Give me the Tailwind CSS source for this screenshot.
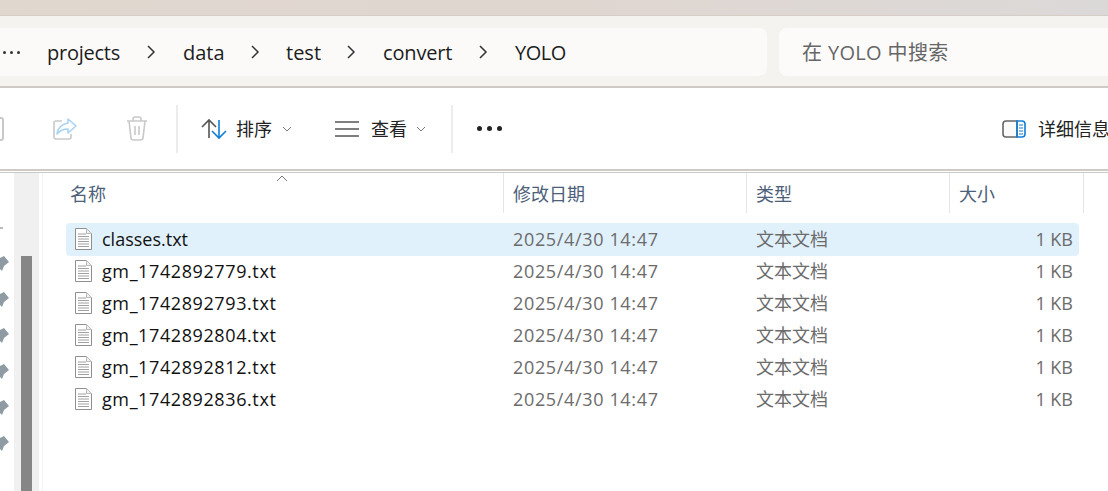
<!DOCTYPE html>
<html lang="en">
<head>
  <meta charset="UTF-8" />
  <title>YOLO</title>
  <script src="https://cdn.jsdelivr.net/npm/@tailwindcss/browser@4"></script>
</head>
<body class="w-[1108px] h-[491px] overflow-hidden bg-white font-['Open_Sans','Noto_Sans_CJK_SC',sans-serif]">

  <!-- window top edge -->
  <div class="h-[15px] bg-gradient-to-r from-[#e0d7cf] via-[#e0d6d0] to-[#dbd9d8]"></div>

  <!-- address bar -->
  <div class="h-[73px] flex gap-3 pt-3 pb-2.5 bg-[#f5f3f0] border-t border-b-2 border-t-[#d6cdc6] border-b-[#d0cac5]">
    <div class="w-[767px] h-12 flex items-center bg-[#fbfaf9] rounded-r-lg text-[20px] text-[#1c1c1c]">
      <div class="w-[47px] pl-[3px] flex gap-[4px]">
        <span class="size-[3px] rounded-full bg-[#333]"></span>
        <span class="size-[3px] rounded-full bg-[#333]"></span>
        <span class="size-[3px] rounded-full bg-[#333]"></span>
      </div>
      <span class="w-[73px] pt-0.5 tracking-[-0.25px]">projects</span>
      <svg class="ml-[26px] w-[10px] h-[14px]" viewBox="0 0 10 14" fill="none" stroke="#333" stroke-width="1.5"><path d="M2 1l6 6-6 6"/></svg>
      <span class="ml-[27px] w-[41px] pt-0.5">data</span>
      <svg class="ml-[26px] w-[10px] h-[14px]" viewBox="0 0 10 14" fill="none" stroke="#333" stroke-width="1.5"><path d="M2 1l6 6-6 6"/></svg>
      <span class="ml-[26px] w-[34px] pt-0.5">test</span>
      <svg class="ml-[26px] w-[10px] h-[14px]" viewBox="0 0 10 14" fill="none" stroke="#333" stroke-width="1.5"><path d="M2 1l6 6-6 6"/></svg>
      <span class="ml-[27px] w-[69px] pt-0.5 tracking-[-0.15px]">convert</span>
      <svg class="ml-[26px] w-[10px] h-[14px]" viewBox="0 0 10 14" fill="none" stroke="#333" stroke-width="1.5"><path d="M2 1l6 6-6 6"/></svg>
      <span class="ml-[27px] pt-0.5 tracking-[-0.5px]">YOLO</span>
    </div>
    <div class="flex-1 h-12 flex items-center pl-[23px] pt-0.5 bg-[#fcfbfa] rounded-l-lg text-[20px] tracking-[0.35px] text-[#666]">在 YOLO 中搜索</div>
  </div>

  <!-- command bar -->
  <div class="h-[81px] flex items-center overflow-hidden whitespace-nowrap bg-white text-[18px] text-[#222] *:shrink-0">
    <div class="w-[176px] flex items-center">
      <svg class="w-[4px] h-[24px]" viewBox="0 0 4 24" fill="none" stroke="#c8c8c8" stroke-width="2"><path d="M-4 1h5q2 0 2 2v18q0 2-2 2h-5"/></svg>
      <svg class="ml-[48px] w-[26px] h-[24px]" viewBox="0 0 26 24" fill="none" stroke-width="1.6">
        <path d="M10 4H4Q2 4 2 6v14q0 2 2 2h13q2 0 2-2v-3" stroke="#c9c9c9"/>
        <path d="M16 2l8 7-8 7v-4q-7 0-11 5 1-9 11-11z" stroke="#a9d3f5" stroke-linejoin="round"/>
      </svg>
      <svg class="ml-[47px] w-[24px] h-[26px]" viewBox="0 0 24 26" fill="none" stroke="#c9c9c9" stroke-width="1.6">
        <path d="M2 5h20M8 5V3q0-2 2-2h4q2 0 2 2v2M4 5l2 17q0 2 3 2h6q3 0 3-2l2-17M10 10v9M14 10v9"/>
      </svg>
    </div>
    <div class="w-[2px] h-12 bg-[#ececec]"></div>
    <svg class="ml-[23px] w-[26px] h-[22px]" viewBox="0 0 26 22" fill="none" stroke-width="1.6">
      <path d="M8 20V2M1 9l7-7 7 7" stroke="#555"/>
      <path d="M18 2v18M11 13l7 7 7-7" stroke="#0f7fd8"/>
    </svg>
    <span class="ml-[9px] pt-0.5">排序</span>
    <svg class="ml-[10px] w-[10px] h-[6px]" viewBox="0 0 10 6" fill="none" stroke="#777"><path d="M1 1l4 4 4-4"/></svg>
    <svg class="ml-[43px] w-[25px] h-[16px]" viewBox="0 0 25 16" fill="none" stroke="#555" stroke-width="1.6"><path d="M0 1h24M0 8h24M0 15h24"/></svg>
    <span class="ml-[11px] pt-0.5">查看</span>
    <svg class="ml-[9px] w-[10px] h-[6px]" viewBox="0 0 10 6" fill="none" stroke="#777"><path d="M1 1l4 4 4-4"/></svg>
    <div class="ml-[25px] w-[2px] h-12 bg-[#ececec]"></div>
    <div class="ml-[24px] flex gap-[5px]">
      <span class="size-[5px] rounded-full bg-[#222]"></span>
      <span class="size-[5px] rounded-full bg-[#222]"></span>
      <span class="size-[5px] rounded-full bg-[#222]"></span>
    </div>
    <svg class="ml-[500px] w-[24px] h-[18px]" viewBox="0 0 24 18" fill="none" stroke-width="1.6">
      <path d="M15 1H4Q1 1 1 4v10q0 3 3 3h11z" fill="#fafafa" stroke="#666"/>
      <path d="M15 1h5q3 0 3 3v10q0 3-3 3h-5z" stroke="#0f7fd8"/>
      <path d="M17 5h4M17 8h4M17 11h4M17 14h4" stroke="#0f7fd8" stroke-width="1.2"/>
    </svg>
    <span class="ml-[12px] pt-0.5">详细信息</span>
  </div>

  <div class="h-[3px] bg-white border-t-2 border-[#d0cac5]"></div>
  <div class="h-px bg-[#c9c9c9]"></div>

  <div class="flex h-[318px]">
    <!-- nav pane edge -->
    <div class="w-[43px] shrink-0 flex border-r border-[#f4f4f4]">
      <div class="w-[14px] flex flex-col items-start pt-[54px]">
        <span class="w-[3px] h-[2px] bg-[#bbb] mb-[27px]"></span>
        <div class="flex flex-col gap-[21px]">
          <svg class="w-[9px] h-[15px] shrink-0" viewBox="0 0 9 15" fill="#8f9ba3"><path d="M0 2l4-2 5 6-5 4-2 5-2-2z"/></svg>
          <svg class="w-[9px] h-[15px] shrink-0" viewBox="0 0 9 15" fill="#8f9ba3"><path d="M0 2l4-2 5 6-5 4-2 5-2-2z"/></svg>
          <svg class="w-[9px] h-[15px] shrink-0" viewBox="0 0 9 15" fill="#8f9ba3"><path d="M0 2l4-2 5 6-5 4-2 5-2-2z"/></svg>
          <svg class="w-[9px] h-[15px] shrink-0" viewBox="0 0 9 15" fill="#8f9ba3"><path d="M0 2l4-2 5 6-5 4-2 5-2-2z"/></svg>
          <svg class="w-[9px] h-[15px] shrink-0" viewBox="0 0 9 15" fill="#8f9ba3"><path d="M0 2l4-2 5 6-5 4-2 5-2-2z"/></svg>
          <svg class="w-[9px] h-[15px] shrink-0" viewBox="0 0 9 15" fill="#8f9ba3"><path d="M0 2l4-2 5 6-5 4-2 5-2-2z"/></svg>
        </div>
      </div>
      <div class="w-[25px] bg-[#f0f0f0] pl-[7px] pt-[83px]">
        <div class="w-[11px] h-[235px] bg-[#868686]"></div>
      </div>
    </div>

    <div class="flex-1 relative">
      <!-- column headers -->
      <div class="h-10 flex text-[18px] text-[#4c607a]">
        <div class="w-[460px] pl-[27px] pt-2">名称</div>
        <div class="w-[243px] pl-[9px] pt-2 border-l border-[#e5e5e5]">修改日期</div>
        <div class="w-[203px] pl-[9px] pt-2 border-l border-[#e5e5e5]">类型</div>
        <div class="w-[135px] pl-[9px] pt-2 border-l border-r border-[#e5e5e5]">大小</div>
      </div>
      <svg class="absolute left-[233px] top-[2px] w-[12px] h-[7px]" viewBox="0 0 12 7" fill="none" stroke="#777"><path d="M1 6l5-5 5 5"/></svg>

      <!-- file rows -->
      <div class="mt-[10px] ml-[23px] w-[1013px] text-[18px] leading-[32px]">
        <div class="h-[33px] flex items-center pb-0.5 rounded-sm bg-[#e1f1fc]">
          <svg class="ml-[9px] w-[17px] h-[22px]" viewBox="0 0 17 22" fill="#fff" stroke="#8f8f8f"><path d="M.5.5h11l5 5v16H.5z"/><path d="M11.500.5v5h5" fill="#eee" stroke="#bbb"/><path d="M3 6h8M3 8.500h11M3 11h11M3 13.500h11M3 16h11M3 18.500h11" stroke="#a0a0a0"/></svg>
          <span class="ml-[10px] w-[411px] text-[#111]">classes.txt</span>
          <span class="w-[243px] tracking-[0.65px] text-[#6b6b6b]">2025/4/30 14:47</span>
          <span class="w-[203px] text-[#6b6b6b]">文本文档</span>
          <span class="w-[114px] text-right text-[#6b6b6b]">1 KB</span>
        </div>
        <div class="h-8 flex items-center pb-0.5">
          <svg class="ml-[9px] w-[17px] h-[22px]" viewBox="0 0 17 22" fill="#fff" stroke="#8f8f8f"><path d="M.5.5h11l5 5v16H.5z"/><path d="M11.500.5v5h5" fill="#eee" stroke="#bbb"/><path d="M3 6h8M3 8.500h11M3 11h11M3 13.500h11M3 16h11M3 18.500h11" stroke="#a0a0a0"/></svg>
          <span class="ml-[10px] w-[411px] tracking-[0.6px] text-[#111]">gm_1742892779.txt</span>
          <span class="w-[243px] tracking-[0.65px] text-[#6b6b6b]">2025/4/30 14:47</span>
          <span class="w-[203px] text-[#6b6b6b]">文本文档</span>
          <span class="w-[114px] text-right text-[#6b6b6b]">1 KB</span>
        </div>
        <div class="h-8 flex items-center pb-0.5">
          <svg class="ml-[9px] w-[17px] h-[22px]" viewBox="0 0 17 22" fill="#fff" stroke="#8f8f8f"><path d="M.5.5h11l5 5v16H.5z"/><path d="M11.500.5v5h5" fill="#eee" stroke="#bbb"/><path d="M3 6h8M3 8.500h11M3 11h11M3 13.500h11M3 16h11M3 18.500h11" stroke="#a0a0a0"/></svg>
          <span class="ml-[10px] w-[411px] tracking-[0.6px] text-[#111]">gm_1742892793.txt</span>
          <span class="w-[243px] tracking-[0.65px] text-[#6b6b6b]">2025/4/30 14:47</span>
          <span class="w-[203px] text-[#6b6b6b]">文本文档</span>
          <span class="w-[114px] text-right text-[#6b6b6b]">1 KB</span>
        </div>
        <div class="h-8 flex items-center pb-0.5">
          <svg class="ml-[9px] w-[17px] h-[22px]" viewBox="0 0 17 22" fill="#fff" stroke="#8f8f8f"><path d="M.5.5h11l5 5v16H.5z"/><path d="M11.500.5v5h5" fill="#eee" stroke="#bbb"/><path d="M3 6h8M3 8.500h11M3 11h11M3 13.500h11M3 16h11M3 18.500h11" stroke="#a0a0a0"/></svg>
          <span class="ml-[10px] w-[411px] tracking-[0.6px] text-[#111]">gm_1742892804.txt</span>
          <span class="w-[243px] tracking-[0.65px] text-[#6b6b6b]">2025/4/30 14:47</span>
          <span class="w-[203px] text-[#6b6b6b]">文本文档</span>
          <span class="w-[114px] text-right text-[#6b6b6b]">1 KB</span>
        </div>
        <div class="h-8 flex items-center pb-0.5">
          <svg class="ml-[9px] w-[17px] h-[22px]" viewBox="0 0 17 22" fill="#fff" stroke="#8f8f8f"><path d="M.5.5h11l5 5v16H.5z"/><path d="M11.500.5v5h5" fill="#eee" stroke="#bbb"/><path d="M3 6h8M3 8.500h11M3 11h11M3 13.500h11M3 16h11M3 18.500h11" stroke="#a0a0a0"/></svg>
          <span class="ml-[10px] w-[411px] tracking-[0.6px] text-[#111]">gm_1742892812.txt</span>
          <span class="w-[243px] tracking-[0.65px] text-[#6b6b6b]">2025/4/30 14:47</span>
          <span class="w-[203px] text-[#6b6b6b]">文本文档</span>
          <span class="w-[114px] text-right text-[#6b6b6b]">1 KB</span>
        </div>
        <div class="h-8 flex items-center pb-0.5">
          <svg class="ml-[9px] w-[17px] h-[22px]" viewBox="0 0 17 22" fill="#fff" stroke="#8f8f8f"><path d="M.5.5h11l5 5v16H.5z"/><path d="M11.500.5v5h5" fill="#eee" stroke="#bbb"/><path d="M3 6h8M3 8.500h11M3 11h11M3 13.500h11M3 16h11M3 18.500h11" stroke="#a0a0a0"/></svg>
          <span class="ml-[10px] w-[411px] tracking-[0.6px] text-[#111]">gm_1742892836.txt</span>
          <span class="w-[243px] tracking-[0.65px] text-[#6b6b6b]">2025/4/30 14:47</span>
          <span class="w-[203px] text-[#6b6b6b]">文本文档</span>
          <span class="w-[114px] text-right text-[#6b6b6b]">1 KB</span>
        </div>
      </div>
    </div>
  </div>

</body>
</html>
